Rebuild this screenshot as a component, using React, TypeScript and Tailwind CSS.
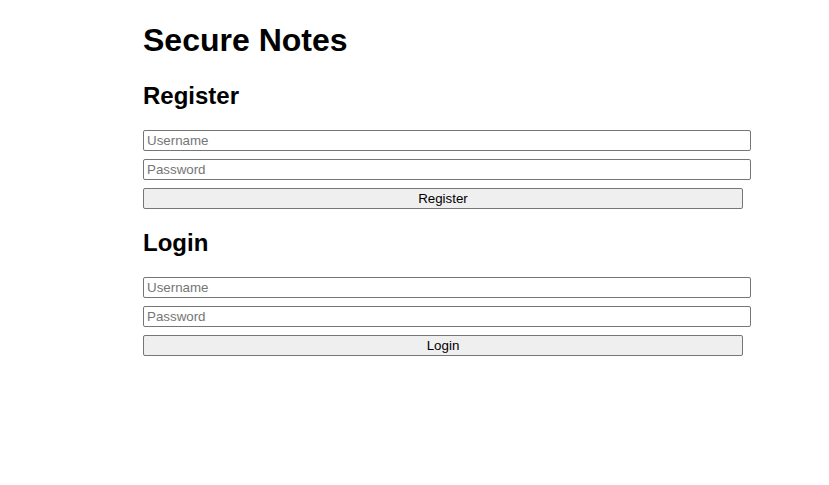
import React from "react";

function Field({ placeholder, type = "text" }: { placeholder: string; type?: string }) {
  return (
    <input
      type={type}
      placeholder={placeholder}
      className="block box-border w-[608px] h-[21px] pl-[3px] pr-[2px] py-[1px] border border-[#767676] rounded-[2px] bg-white text-[13.333px] leading-[17px] text-black placeholder:text-[#757575] outline-none font-['Liberation_Sans',Arial,sans-serif]"
    />
  );
}

function Btn({ label }: { label: string }) {
  return (
    <button className="block box-border w-[600px] h-[21px] border border-[#767676] rounded-[2px] bg-[#efefef] text-[13.333px] leading-[17px] text-black text-center font-['Liberation_Sans',Arial,sans-serif]">
      {label}
    </button>
  );
}

export default function App() {
  return (
    <div className="w-[829px] h-[485px] bg-white text-black font-['Liberation_Sans',Arial,sans-serif] overflow-hidden">
      <div className="ml-[143px] w-[600px] pt-[22px]">
        <h1 className="text-[32px] font-bold leading-[37px]">Secure Notes</h1>
        <h2 className="mt-[23px] text-[24px] font-bold leading-[28px]">Register</h2>
        <div className="mt-[20px] flex flex-col gap-[8px]">
          <Field placeholder="Username" />
          <Field placeholder="Password" type="password" />
          <Btn label="Register" />
        </div>
        <h2 className="mt-[20px] text-[24px] font-bold leading-[28px]">Login</h2>
        <div className="mt-[20px] flex flex-col gap-[8px]">
          <Field placeholder="Username" />
          <Field placeholder="Password" type="password" />
          <Btn label="Login" />
        </div>
      </div>
    </div>
  );
}
